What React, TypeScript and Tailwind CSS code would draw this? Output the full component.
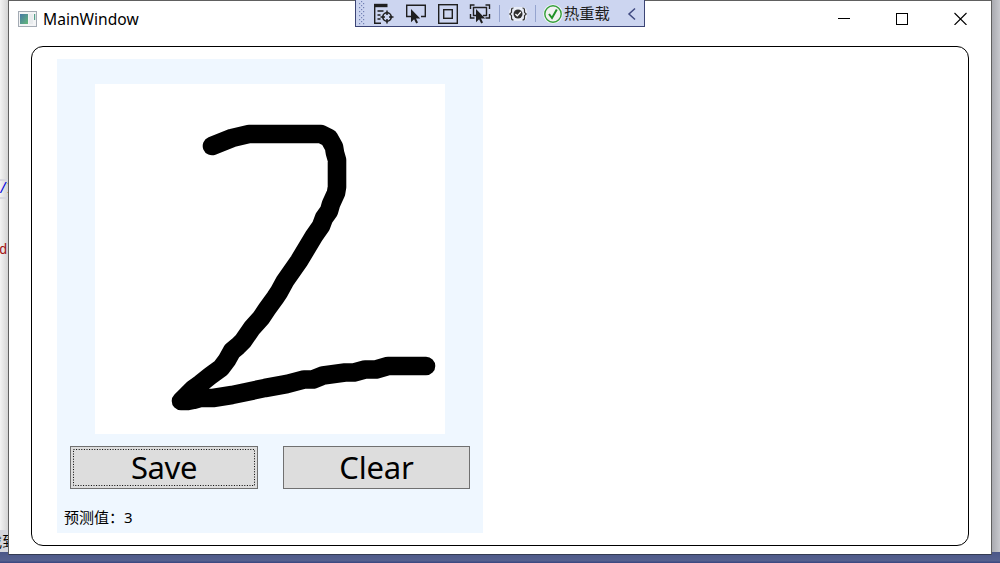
import type { ReactNode } from "react";

function ToolIcon({ children }: { children: ReactNode }) {
  return (
    <svg className="h-[22px] w-[22px] shrink-0" viewBox="0 0 22 22" fill="none" stroke="#1f1f1f" strokeWidth="1.4">
      {children}
    </svg>
  );
}

const cursor = "M0 0V13.2L3.1 10.3L5.2 14.6L7 13.6L5 9.6H9.2Z";

function DebugToolbar() {
  return (
    <div className="absolute left-[355px] top-0 flex h-[27px] w-[290px] items-center border border-t-0 border-[#3b4475] bg-[#ccd5f0]">
      <svg className="ml-[2px] h-[24px] w-[8px] shrink-0" viewBox="0 0 8 24" fill="#7280b4">
        {[2, 6, 10, 14, 18, 22].map((y) => (
          <g key={y}>
            <rect x="1" y={y} width="1.2" height="1.2" />
            <rect x="5" y={y} width="1.2" height="1.2" />
            <rect x="3" y={y - 2} width="1.2" height="1.2" />
          </g>
        ))}
      </svg>
      <div className="ml-[7px] mt-px flex gap-[10px]">
        <ToolIcon>
          <path d="M1 2.5H14.5" strokeWidth="3.4" />
          <path d="M1.7 4V20.3H8M4.500 8H10.500M4.500 12H7.500M4.500 16H7.500" />
          <circle cx="14" cy="14" r="4.2" strokeWidth="1.6" />
          <path d="M14 7.5V12M14 16V20.5M7.500 14H12M16 14H20.5" strokeWidth="1.5" />
        </ToolIcon>
        <ToolIcon>
          <path d="M7 13.5H1.7V2.2H20.3V13.5H16" />
          <path transform="translate(6 6)" d={cursor} fill="#1f1f1f" stroke="none" />
        </ToolIcon>
        <ToolIcon>
          <rect x="1.7" y="1.7" width="18.6" height="18.6" />
          <rect x="6.7" y="6.7" width="8.6" height="8.6" />
        </ToolIcon>
        <ToolIcon>
          <path d="M1.5 6V2H5.5M16.5 2H20.5V6M1.5 11V15H5.5M20.5 11V15H16.5" />
          <path d="M8 12.5H4.5V4.5H17.5V12.5H14" />
          <path transform="translate(7 6)" d={cursor} fill="#1f1f1f" stroke="none" />
        </ToolIcon>
      </div>
      <span className="ml-[8px] h-[17px] w-px shrink-0 bg-[#95a4cf]" />
      <svg className="ml-[8px] mt-[2px] h-[18px] w-[20px] shrink-0" viewBox="0 0 20 18">
        <rect x="1" y="2" width="18" height="14" rx="5" fill="#e9edf7" />
        <path d="M5.5 3Q3.5 3 3.5 5V7.3L1.8 9L3.5 10.7V13Q3.5 15 5.5 15M14.5 3Q16.5 3 16.5 5V7.3L18.2 9L16.5 10.7V13Q16.5 15 14.5 15" fill="none" stroke="#303030" strokeWidth="1.2" />
        <circle cx="10" cy="9" r="4.5" fill="#303030" />
        <path d="M7.4 9L9.3 10.8L12.8 7" fill="none" stroke="#fff" strokeWidth="1.2" />
      </svg>
      <span className="ml-[7px] h-[17px] w-px shrink-0 bg-[#95a4cf]" />
      <svg className="ml-[7px] mt-[2px] h-[20px] w-[20px] shrink-0" viewBox="0 0 20 20">
        <circle cx="10" cy="10" r="9.8" fill="#f2f5fb" />
        <circle cx="10" cy="10" r="8.2" fill="#f1f1f1" stroke="#35a03a" strokeWidth="1.4" />
        <path d="M6 10L9 14L13.8 5.5" fill="none" stroke="#219127" strokeWidth="2" />
      </svg>
      <span className="ml-[1px] whitespace-nowrap text-[15.3px] leading-[20px] text-[#1e1e1e]">热重载</span>
      <svg className="ml-[17px] mt-[2px] h-[14px] w-[9px] shrink-0" viewBox="0 0 9 14" fill="none" stroke="#3f4980" strokeWidth="1.5">
        <path d="M8 1.5L2 7L8 12.5" />
      </svg>
    </div>
  );
}

function TitleBar() {
  return (
    <header className="flex h-[35px] shrink-0 items-center">
      <svg className="ml-[9px] h-[16px] w-[19px] shrink-0" viewBox="0 0 19 16">
        <defs>
          <linearGradient id="pane" x1="0" y1="0" x2="1" y2="1">
            <stop offset="0" stopColor="#4678a6" />
            <stop offset="1" stopColor="#63b878" />
          </linearGradient>
        </defs>
        <rect x="0.5" y="0.5" width="18" height="15" fill="#f3f4f5" stroke="#a4abb4" />
        <rect x="2" y="3" width="8" height="10" fill="url(#pane)" />
        <rect x="11" y="3" width="4" height="10" fill="#e8ebed" />
        <rect x="16" y="3" width="1.2" height="6" fill="#55a18a" />
      </svg>
      <h1 className="ml-[6px] text-[15.6px] leading-[20px]">MainWindow</h1>
      <div className="ml-auto mr-[24px] flex gap-[46px]">
        <svg className="h-[13px] w-[13px]" viewBox="0 0 13 13" shapeRendering="crispEdges">
          <path d="M0.5 6.5H12.5" stroke="#000" />
        </svg>
        <svg className="h-[13px] w-[12px]" viewBox="0 0 12 13" shapeRendering="crispEdges">
          <rect x="0.5" y="1.5" width="11" height="11" fill="none" stroke="#000" />
        </svg>
        <svg className="h-[13px] w-[13px]" viewBox="0 0 13 13">
          <path d="M0.5 1L12.5 13M12.5 1L0.5 13" stroke="#000" strokeWidth="1.1" />
        </svg>
      </div>
    </header>
  );
}

function DrawingCanvas() {
  return (
    <svg className="ml-[38px] block h-[350px] w-[350px] bg-white" viewBox="95 84 350 350">
      <path
        d="M212 146L232 138L249 134H321L329 138L334 147L335 153L337 160V187L336 193L331 204L329 211L324 218L321 226L314 236L299 261L285 281L279 292L275 298L267 309L261 318L252 328L243 341L238 346L232 351L227 360L221 368L210 376L200 384L193 389L187 395L181 401H188L193 400L200 398H213L232 395L265 388L287 384L304 379.5H313L323 375.5L345 372.5H354L365 369.5H376L388 366H426"
        fill="none"
        stroke="#000"
        strokeWidth="18.6"
        strokeLinecap="round"
        strokeLinejoin="round"
      />
    </svg>
  );
}

export default function App() {
  return (
    <div className="relative flex h-[563px] w-[1000px] overflow-hidden bg-[linear-gradient(#0000_552px,#4b5788_552px,#56618f_561px,#3e4a82_562px)] font-['Noto_Sans','Noto_Sans_CJK_SC',sans-serif] text-black">
      <aside className="flex h-[552px] w-[8px] shrink-0 flex-col overflow-hidden whitespace-nowrap bg-linear-to-r from-[#f3f3f3] to-[#d4d4d4] font-['Liberation_Mono',monospace] text-[14px] leading-[18px]">
        <div className="mt-[179px] h-[20px] border-y-2 border-[#d8d8df] leading-[16px] text-[#0000e0]">
          <span className="-ml-[1px]">/</span>
          <span className="-ml-[1px] text-[#a31515]">I</span>
        </div>
        <div className="-ml-[1px] mt-[42px] text-[#a31515]">dd</div>
        <div className="mt-auto h-[22px] bg-[#d6d7dd] font-['Noto_Sans_CJK_SC',sans-serif] text-[15px] leading-[22px]">
          <span className="-ml-[13px]">找到</span>
        </div>
      </aside>
      <main className="flex h-[555px] w-[984px] shrink-0 flex-col border border-[#606060] border-b-[#343b52] bg-white">
        <TitleBar />
        <section className="ml-[22px] mt-[10px] h-[500px] w-[938px] shrink-0 rounded-[12px] border border-black pl-[25px] pt-[12px]">
          <div className="flex h-[474px] w-[425.5px] flex-col bg-[#eff7ff] pt-[25px]">
            <DrawingCanvas />
            <div className="ml-[13px] mt-[12px] flex gap-[25px] text-[31px] leading-[41px]">
              <button className="relative flex h-[43px] w-[188px] items-center justify-center border border-[#707070] bg-[#ddd]">
                <svg className="absolute left-[2px] top-[2px] h-[37px] w-[182px]" viewBox="0 0 182 37" aria-hidden="true">
                  <rect x="0.5" y="0.5" width="181" height="36" fill="none" stroke="#000" strokeDasharray="1 1.6" />
                </svg>
                <span className="-mt-px tracking-[-0.4px]">Save</span>
              </button>
              <button className="h-[43px] w-[187px] border border-[#707070] bg-[#ddd] tracking-[-0.2px]">Clear</button>
            </div>
            <p className="ml-[7px] mt-[17px] text-[15px] leading-[22px]">预测值：3</p>
          </div>
        </section>
      </main>
      <div className="h-[552px] w-[8px] shrink-0 bg-linear-to-r from-[#a9aab0] to-[#c7c8cd]" />
      <DebugToolbar />
    </div>
  );
}
